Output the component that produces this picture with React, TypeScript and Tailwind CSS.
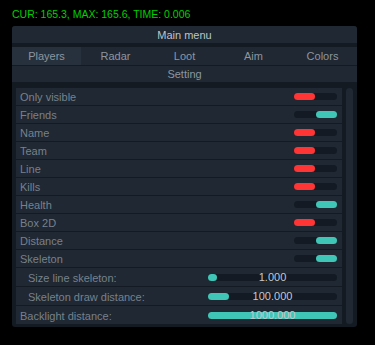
import React from "react";

type Row =
  | { label: string; kind: "toggle"; on: boolean; indent?: boolean }
  | { label: string; kind: "slider"; fill: number; value: string; indent?: boolean };

const rows: Row[] = [
  { label: "Only visible", kind: "toggle", on: false },
  { label: "Friends", kind: "toggle", on: true },
  { label: "Name", kind: "toggle", on: false },
  { label: "Team", kind: "toggle", on: false },
  { label: "Line", kind: "toggle", on: false },
  { label: "Kills", kind: "toggle", on: false },
  { label: "Health", kind: "toggle", on: true },
  { label: "Box 2D", kind: "toggle", on: false },
  { label: "Distance", kind: "toggle", on: true },
  { label: "Skeleton", kind: "toggle", on: true },
  { label: "Size line skeleton:", kind: "slider", fill: 9, value: "1.000", indent: true },
  { label: "Skeleton draw distance:", kind: "slider", fill: 21, value: "100.000", indent: true },
  { label: "Backlight distance:", kind: "slider", fill: 129, value: "1000.000" },
];

const tabs = ["Players", "Radar", "Loot", "Aim", "Colors"];

function Toggle({ on }: { on: boolean }) {
  return (
    <div className={`flex h-[7px] w-[43px] rounded-full bg-[#131a23] ${on ? "justify-end" : "justify-start"}`}>
      <div className={`h-full w-[21px] rounded-full ${on ? "bg-[#40c6b6]" : "bg-[#ff3434]"}`} />
    </div>
  );
}

function Slider({ fill, value }: { fill: number; value: string }) {
  return (
    <div className="relative h-[7px] w-[129px] rounded-full bg-[#131a23]">
      <div className="h-full rounded-full bg-[#40c6b6]" style={{ width: fill }} />
      <span className="absolute inset-x-0 top-[-4px] text-center text-[11px] leading-[14px] text-[#c3c9cf]">
        {value}
      </span>
    </div>
  );
}

export default function App() {
  return (
    <div className="min-h-[345px] bg-black font-['Liberation_Sans',Arial,sans-serif]">
      <div className="h-[26px] pl-[12px] pt-[8px] text-[10.5px] leading-[12px] text-[#00d000]">
        CUR: 165.3, MAX: 165.6, TIME: 0.006
      </div>
      <div className="ml-[12px] flex w-[345px] flex-col rounded-[3px] bg-[#141a22]">
        <div className="flex h-[17px] items-center justify-center rounded-t-[3px] bg-[#1f2833] pt-[2px] text-[11px] text-[#b9c6cb]">
          Main menu
        </div>
        <div className="h-[4px]" />
        <div className="grid h-[18px] grid-cols-5 bg-[#1f2833] text-[11px] text-[#8d96a0]">
          {tabs.map((t, i) => (
            <div key={t} className={`flex items-center justify-center ${i === 0 ? "bg-[#27313e]" : ""}`}>
              {t}
            </div>
          ))}
        </div>
        <div className="h-[1px]" />
        <div className="flex h-[16px] items-center justify-center bg-[#1f2833] text-[11px] text-[#8d96a0]">
          Setting
        </div>
        <div className="h-[6px]" />
        <div className="flex gap-[4px] px-[4px] pb-[3px]">
          <div className="flex w-[326px] flex-col gap-[1px]">
            {rows.map((r) => (
              <div
                key={r.label}
                className={`flex items-center justify-between bg-[#1f2833] pr-[5px] ${r.kind === "slider" ? "h-[18px]" : "h-[17px]"}`}
              >
                <span className={`pt-[2px] text-[11px] text-[#78818b] ${r.indent ? "pl-[12px]" : "pl-[4px]"}`}>{r.label}</span>
                {r.kind === "toggle" ? <Toggle on={r.on} /> : <Slider fill={r.fill} value={r.value} />}
              </div>
            ))}
          </div>
          <div className="w-[7px] rounded-full bg-[#1f2833]" />
        </div>
      </div>
    </div>
  );
}
